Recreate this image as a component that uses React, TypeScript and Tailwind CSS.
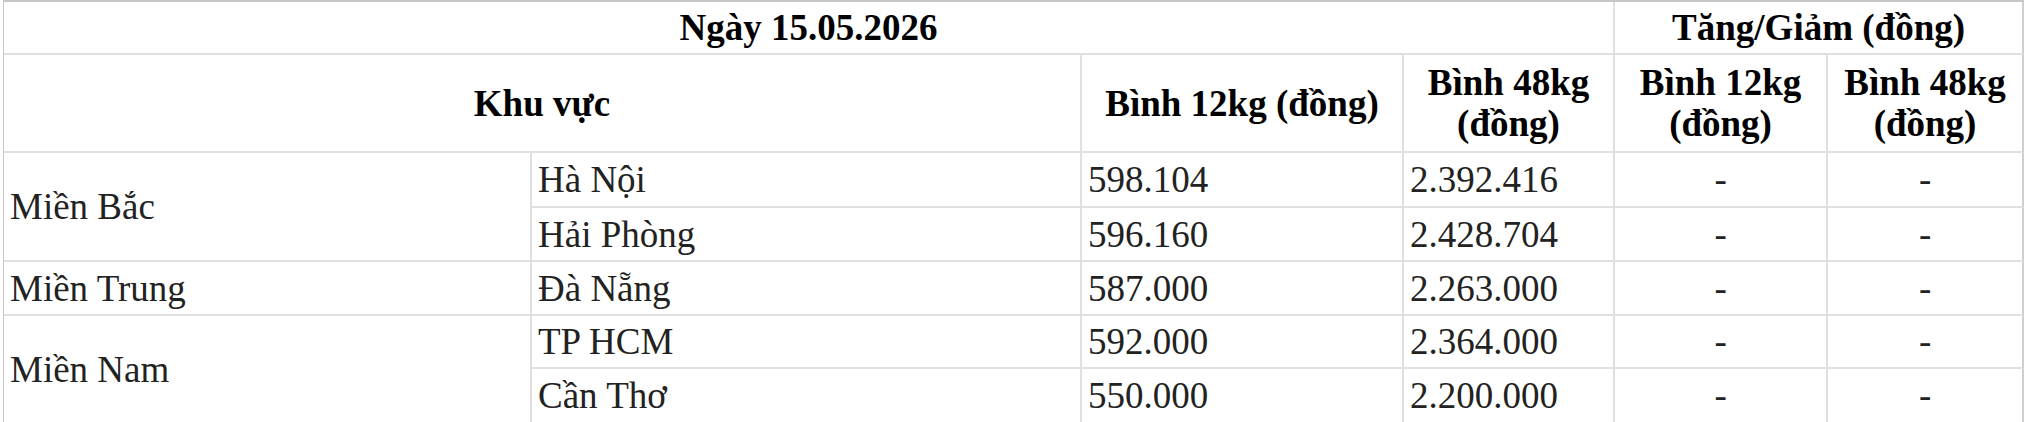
import React from "react";

const font = { fontFamily: '"Liberation Serif", "Times New Roman", serif' };

const rows = [
  { region: "Miền Bắc", span: 2, city: "Hà Nội", a: "598.104", b: "2.392.416", h: "h-[55px]" },
  { region: null, span: 0, city: "Hải Phòng", a: "596.160", b: "2.428.704", h: "h-[54px]" },
  { region: "Miền Trung", span: 1, city: "Đà Nẵng", a: "587.000", b: "2.263.000", h: "h-[54px]" },
  { region: "Miền Nam", span: 2, city: "TP HCM", a: "592.000", b: "2.364.000", h: "h-[53px]" },
  { region: null, span: 0, city: "Cần Thơ", a: "550.000", b: "2.200.000", h: "h-[55px]" },
];

const cell = "border-r-2 border-b-2 border-[#e0e0e0] px-[6px] py-0 align-middle";
const last = "border-r-2 border-b-2 border-b-[#e0e0e0] border-r-[#cfcfcf] px-[6px] py-0 align-middle";

export default function App() {
  return (
    <div className="w-[2024px] h-[422px] overflow-hidden bg-white" style={font}>
      <table
        className="ml-[3px] w-[2021px] table-fixed border-separate border-spacing-0 border-t-2 border-l border-t-[#c6c6c6] border-l-[#c6c6c6] text-[37px] leading-[41px]"
      >
        <colgroup>
          <col className="w-[528px]" />
          <col className="w-[550px]" />
          <col className="w-[322px]" />
          <col className="w-[211px]" />
          <col className="w-[213px]" />
          <col className="w-[196px]" />
        </colgroup>
        <thead>
          <tr className="h-[53px]">
            <th colSpan={4} className={`${cell} text-center font-bold text-black`}>
              Ngày 15.05.2026
            </th>
            <th colSpan={2} className={`${last} text-center font-bold text-black`}>
              Tăng/Giảm (đồng)
            </th>
          </tr>
          <tr className="h-[98px]">
            <th colSpan={2} className={`${cell} text-center font-bold text-black`}>
              Khu vực
            </th>
            <th className={`${cell} text-center font-bold text-black`}>Bình 12kg (đồng)</th>
            <th className={`${cell} text-center font-bold text-black`}>Bình 48kg (đồng)</th>
            <th className={`${cell} text-center font-bold text-black`}>Bình 12kg (đồng)</th>
            <th className={`${last} text-center font-bold text-black`}>Bình 48kg (đồng)</th>
          </tr>
        </thead>
        <tbody className="text-[#222222]">
          {rows.map((r, i) => (
            <tr key={i} className={r.h}>
              {r.region !== null && (
                <td rowSpan={r.span} className={`${cell} text-left`}>
                  {r.region}
                </td>
              )}
              <td className={`${cell} text-left`}>{r.city}</td>
              <td className={`${cell} text-left`}>{r.a}</td>
              <td className={`${cell} text-left`}>{r.b}</td>
              <td className={`${cell} text-center`}>-</td>
              <td className={`${last} text-center`}>-</td>
            </tr>
          ))}
        </tbody>
      </table>
    </div>
  );
}
